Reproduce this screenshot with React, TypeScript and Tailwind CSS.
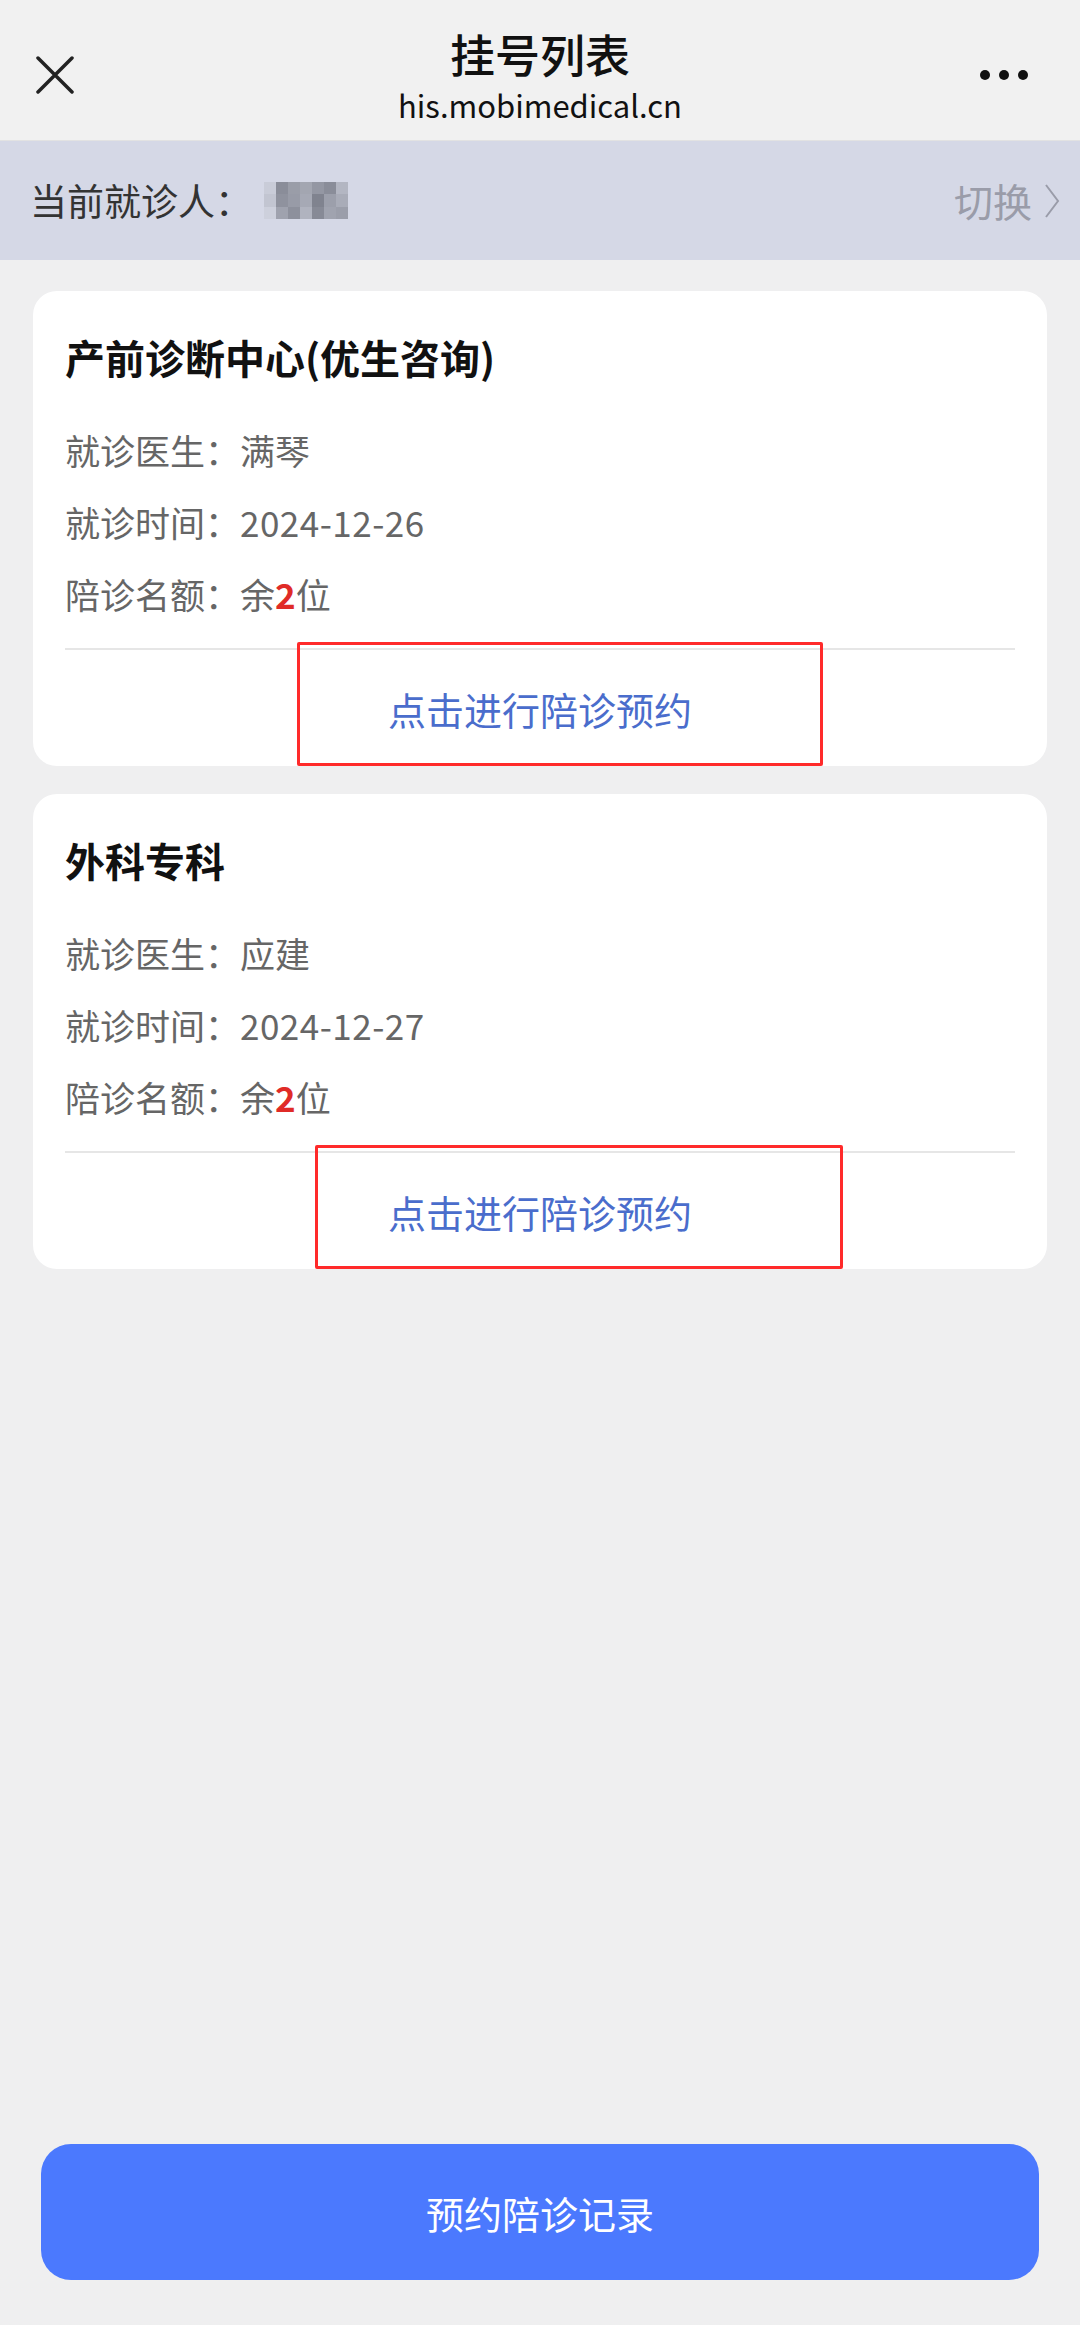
import React from 'react';

interface Visit {
  dept: string;
  doctor: string;
  date: string;
  left: number;
  box: string;
}

const visits: Visit[] = [
  { dept: '产前诊断中心(优生咨询)', doctor: '满琴', date: '2024-12-26', left: 2, box: 'left-[264px] w-[526px]' },
  { dept: '外科专科', doctor: '应建', date: '2024-12-27', left: 2, box: 'left-[282px] w-[528px]' },
];

// blurred patient name, drawn as a mosaic
const mosaic = [
  '#c9ccd8', '#8a8d99', '#9a9da8', '#a3a6b1', '#9497a3', '#8a8d99', '#b3b6c2',
  '#c2c5d1', '#8f929e', '#989ba7', '#a6a9b5', '#80838f', '#9c9fab', '#a9acb8',
  '#cdd0dc', '#9fa2ae', '#8d909c', '#b0b3bf', '#878a96', '#a0a3af', '#9b9eaa',
];

function VisitCard({ v }: { v: Visit }) {
  return (
    <div className="relative bg-white rounded-[24px] mx-[33px] flex flex-col">
      <div className="px-[32px] pt-[38px]">
        <h3 className="text-[40px] leading-[56px] font-bold text-[#111]">{v.dept}</h3>
        <div className="mt-[29px] text-[35px] text-[#666] flex flex-col">
          <div className="h-[72px] flex items-center">就诊医生：{v.doctor}</div>
          <div className="h-[72px] flex items-center">
            就诊时间：<span className="tracking-[0.5px]">{v.date}</span>
          </div>
          <div className="h-[72px] flex items-center">
            陪诊名额：余<span className="text-[#e02b27] font-bold">{v.left}</span>位
          </div>
        </div>
      </div>
      <div className="mt-[18px] mx-[32px] h-[2px] bg-[#e6e6e6]" />
      <div className="h-[116px] flex items-center justify-center text-[38px] text-[#4a6dcc]">
        点击进行陪诊预约
      </div>
      <div className={`absolute top-[351px] h-[124px] border-[3px] border-[#ff2a2a] rounded-[2px] ${v.box}`} />
    </div>
  );
}

export default function App() {
  return (
    <div
      className="min-h-screen bg-[#efeff0] flex flex-col"
      style={{ fontFamily: '"Noto Sans CJK SC", "Noto Sans", Roboto, sans-serif' }}
    >
      {/* title bar */}
      <div className="h-[141px] bg-[#f1f1f1] grid grid-cols-[1fr_auto_1fr] items-center px-[36px] border-b border-[#e2e2e2]">
        <svg width="38" height="38" viewBox="0 0 38 38" className="mt-[10px]">
          <path d="M2 2 L36 36 M36 2 L2 36" stroke="#222" strokeWidth="3.5" strokeLinecap="round" />
        </svg>
        <div className="flex flex-col items-center pt-[10px]">
          <div className="text-[45px] leading-[58px] font-medium text-[#111]">挂号列表</div>
          <div className="text-[31px] leading-[40px] mt-[2px] text-[#111]">his.mobimedical.cn</div>
        </div>
        <div className="flex items-center justify-end gap-[9px] mt-[10px] mr-[16px]">
          <span className="w-[10px] h-[10px] rounded-full bg-[#111]" />
          <span className="w-[10px] h-[10px] rounded-full bg-[#111]" />
          <span className="w-[10px] h-[10px] rounded-full bg-[#111]" />
        </div>
      </div>

      {/* current patient */}
      <div className="h-[119px] bg-[#d5d8e6] flex items-center justify-between pl-[30px] pr-[20px]">
        <div className="flex items-center">
          <span className="text-[37px] text-[#333]">当前就诊人：</span>
          <div className="grid grid-cols-7 w-[84px] h-[37px] ml-[12px]">
            {mosaic.map((c, i) => (
              <div key={i} style={{ background: c }} />
            ))}
          </div>
        </div>
        <div className="flex items-center gap-[12px] text-[39px] text-[#9a9ca9]">
          <span>切换</span>
          <svg width="16" height="38" viewBox="0 0 16 38">
            <path d="M2 3 L14 19 L2 35" fill="none" stroke="#9a9ca9" strokeWidth="2" />
          </svg>
        </div>
      </div>

      {/* list */}
      <div className="flex flex-col gap-[28px] pt-[31px]">
        {visits.map((v) => (
          <VisitCard key={v.dept} v={v} />
        ))}
      </div>

      <div className="mt-auto px-[41px] pb-[45px]">
        <button className="w-full h-[136px] rounded-[30px] bg-[#4b79fe] text-white text-[38px]">
          预约陪诊记录
        </button>
      </div>
    </div>
  );
}
